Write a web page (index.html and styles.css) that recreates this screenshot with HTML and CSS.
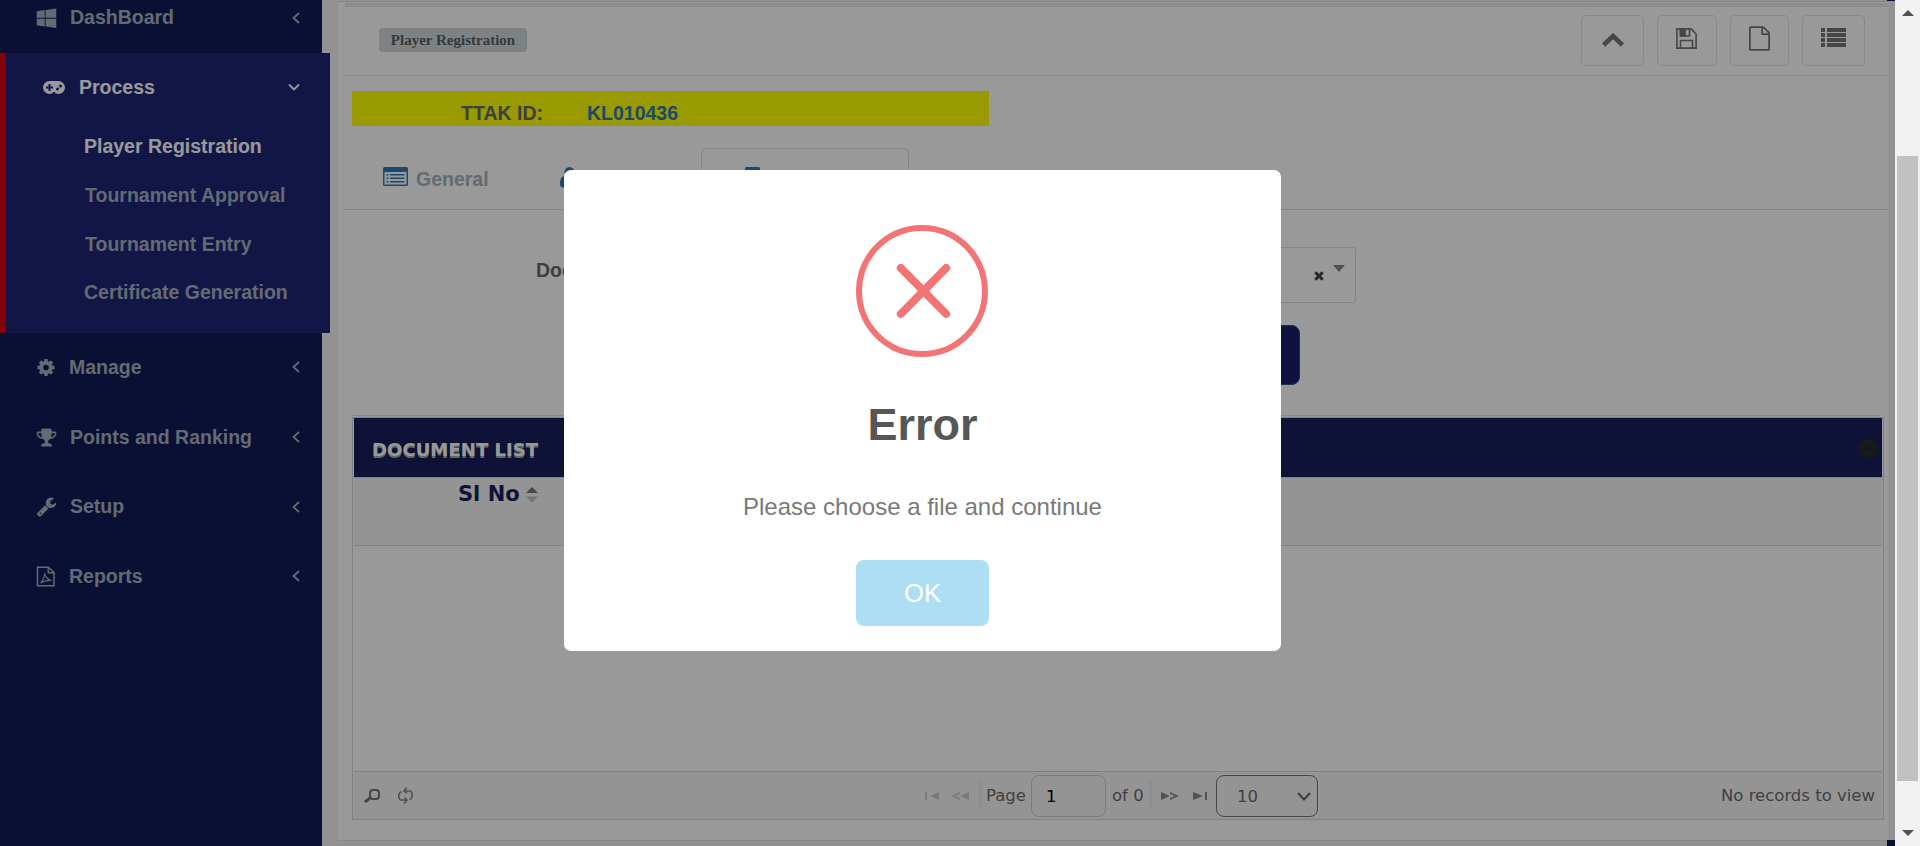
FILE: index.html
```html
<!DOCTYPE html>
<html lang="en">
<head>
<meta charset="utf-8">
<title>Player Registration</title>
<link rel="stylesheet" href="styles.css">
</head>
<body>
<div class="app">
  <nav class="sidebar">
    <div class="item first"><svg class="ic" viewBox="0 0 1792 1792"><path d="M746 1006v651l-682-94v-557h682zm0-743v659h-682v-565zm982 743v786l-907-125v-661h907zm0-878v794h-907v-669z"/></svg><span>DashBoard</span><svg class="angle" viewBox="0 0 8 12"><path d="M7 1 1.500 6 7 11"/></svg></div>
    <div class="group">
      <div class="ghead"><svg class="pad" viewBox="0 0 22 13"><path fill-rule="evenodd" d="M6.500 0h9a6.500 6.500 0 0 1 0 13c-2 0-3-1-4-2h-1c-1 1-2 2-4 2a6.500 6.500 0 0 1 0-13zM5.500 3v2.500H3v2h2.500V10h2V7.500H10v-2H7.500V3zM14.500 6.500a1.500 1.500 0 1 0 0 3 1.500 1.500 0 0 0 0-3zM17.500 3.500a1.500 1.500 0 1 0 0 3 1.500 1.500 0 0 0 0-3z"/></svg><span>Process</span><svg class="angle down" viewBox="0 0 12 8"><path d="M1 1.500 6 6.500 11 1.500"/></svg></div>
      <div class="sub on">Player Registration</div>
      <div class="sub">Tournament Approval</div>
      <div class="sub">Tournament Entry</div>
      <div class="sub">Certificate Generation</div>
    </div>
    <div class="item narrow"><svg class="ic" viewBox="0 0 1792 1792"><path d="M1152 896q0-106-75-181t-181-75-181 75-75 181 75 181 181 75 181-75 75-181zm512-109v222q0 12-8 23t-20 13l-185 28q-19 54-39 91 35 50 107 138 10 12 10 25t-9 23q-27 37-99 108t-94 71q-12 0-26-9l-138-108q-44 23-91 38-16 136-29 186-7 28-36 28h-222q-14 0-24.500-8.500t-11.500-21.500l-28-184q-49-16-90-37l-141 107q-10 9-25 9-14 0-25-11-126-114-165-168-7-10-7-23 0-12 8-23 15-21 51-66.500t54-70.500q-27-50-41-99l-183-27q-13-2-21-12.500t-8-23.500v-222q0-12 8-23t19-13l186-28q14-46 39-92-40-57-107-138-10-12-10-24 0-10 9-23 26-36 98.500-107.500t94.500-71.500q13 0 26 10l138 107q44-23 91-38 16-136 29-186 7-28 36-28h222q14 0 24.500 8.500t11.500 21.500l28 184q49 16 90 37l142-107q9-9 24-9 13 0 25 10 129 119 165 170 7 8 7 22 0 12-8 23-15 21-51 66.500t-54 70.500q26 50 41 98l183 28q13 2 21 12.500t8 23.500z"/></svg><span>Manage</span><svg class="angle" viewBox="0 0 8 12"><path d="M7 1 1.500 6 7 11"/></svg></div>
    <div class="item"><svg class="ic" viewBox="0 0 1792 1792"><path d="M522 883q-74-162-74-371h-256v96q0 78 94.500 162t235.500 113zm1078-275v-96h-256q0 209-74 371 141-29 235.500-113t94.500-162zm128-128v128q0 71-41.500 143t-112 130-173 97.500-215.500 44.500q-42 54-95 95-38 34-52.500 72.500t-14.500 89.500q0 54 30.500 91t97.500 37q75 0 133.500 45.500t58.500 114.500v64q0 14-9 23t-23 9h-832q-14 0-23-9t-9-23v-64q0-69 58.500-114.500t133.500-45.500q67 0 97.500-37t30.500-91q0-51-14.500-89.500t-52.500-72.500q-53-41-95-95-113-5-215.500-44.500t-173-97.500-112-130-41.500-143v-128q0-40 28-68t68-28h288v-96q0-66 47-113t113-47h576q66 0 113 47t47 113v96h288q40 0 68 28t28 68z"/></svg><span>Points and Ranking</span><svg class="angle" viewBox="0 0 8 12"><path d="M7 1 1.500 6 7 11"/></svg></div>
    <div class="item"><svg class="ic" viewBox="0 0 1792 1792"><path d="M448 1472q0-26-19-45t-45-19-45 19-19 45 19 45 45 19 45-19 19-45zm644-420l-682 682q-37 37-90 37-52 0-91-37l-106-108q-38-36-38-90 0-53 38-91l681-681q39 98 114.500 173.500t173.500 114.500zm634-435q0 39-23 106-47 134-164.500 217.500t-258.500 83.500q-185 0-316.500-131.500t-131.500-316.500 131.500-316.500 316.500-131.500q58 0 121.500 16.500t107.500 46.500q16 11 16 28t-16 28l-293 169v224l193 107q5-3 79-48.500t135.500-81 70.500-35.500q15 0 23.500 10t8.500 25z"/></svg><span>Setup</span><svg class="angle" viewBox="0 0 8 12"><path d="M7 1 1.500 6 7 11"/></svg></div>
    <div class="item narrow"><svg class="ic line" viewBox="0 0 20 20"><path d="M1.500.8h11L18 6v13.200H1.500zM12.300.8v5.400H18"/><path stroke-width="1.100" d="M4.500 16.500c2.500-2.500 4-6 4-9.500 1 3.500 3 6 7 7-4-.4-7.500.3-11 2.500z"/></svg><span>Reports</span><svg class="angle" viewBox="0 0 8 12"><path d="M7 1 1.500 6 7 11"/></svg></div>
  </nav>

  <main class="main">
    <section class="panel">
      <header class="title">
        <span class="label">Player Registration</span>
        <div class="tools">
          <span class="btn b1"><svg width="22" height="14" viewBox="0 0 22 14"><path d="m1.600 12 9.400-9 9.400 9" fill="none" stroke="currentColor" stroke-width="4.500"/></svg></span>
          <span class="btn b2"><svg width="21" height="21" viewBox="0 0 21 21" fill="none" stroke="currentColor" stroke-width="1.600"><path d="M.9.9H15l5.100 5.100v14.100H.9zM4.500 20v-7.500h12V20M4.500 1v7h9V1"/><path d="M4.500 1h4.500v7h-4.500z" fill="currentColor"/></svg></span>
          <span class="btn b3"><svg width="21" height="25" viewBox="128 0 1536 1792"><path fill="currentColor" d="M1596 380q28 28 48 76t20 88v1152q0 40-28 68t-68 28h-1344q-40 0-68-28t-28-68v-1600q0-40 28-68t68-28h896q40 0 88 20t76 48zm-444-244v376h376q-10-29-22-41l-313-313q-12-12-41-22zm384 1528v-1024h-416q-40 0-68-28t-28-68v-416h-768v1536h1280z"/></svg></span>
          <span class="btn b4"><svg width="25" height="19" viewBox="0 0 25 19" fill="currentColor"><path d="M0 0h4v4H0zM6 0h19v4H6zM0 5h4v4H0zM6 5h19v4H6zM0 10h4v4H0zM6 10h19v4H6zM0 15h4v4H0zM6 15h19v4H6z"/></svg></span>
        </div>
      </header>
      <div class="idbar"><span class="idlabel">TTAK ID:</span><span class="idvalue">KL010436</span></div>
      <div class="tabs">
        <div class="tab t1"><svg width="25" height="19" viewBox="0 0 25 19"><path fill="currentColor" fill-rule="evenodd" d="M1.500 0h22A1.500 1.500 0 0 1 25 1.500v16a1.500 1.500 0 0 1-1.500 1.500h-22A1.500 1.500 0 0 1 0 17.500v-16A1.500 1.500 0 0 1 1.500 0zM1.500 5v12.500h22V5zM3.500 7h2v1.500h-2zM7 7h14.500v1.500H7zM3.500 10.500h2V12h-2zM7 10.500h14.500V12H7zM3.500 14h2v1.500h-2zM7 14h14.500v1.500H7z"/></svg><span>General</span></div>
        <div class="tab t2"><svg width="20" height="21" viewBox="0 0 20 21"><path fill="currentColor" d="M9.500 0a5 5 0 0 1 5 5.200c0 2.800-2 5-5 5s-5-2.200-5-5a5 5 0 0 1 5-5.200zM4 9c1.500 1.500 3 2.300 5.500 2.300S13.500 10.500 15 9c3 .8 4.500 4 4.500 8 0 2-1 3.500-3 3.500H3c-2 0-3-1.500-3-3.500 0-4 1-7.200 4-8z"/></svg></div>
        <div class="tab t3"><svg width="23" height="20" viewBox="0 0 23 20"><path fill="currentColor" d="M5 0h13q1 0 1 2v18H4V2q0-2 1-2z"/></svg></div>
      </div>
      <div class="form">
        <div class="row"><label>Document</label><div class="select"><svg class="clear" width="10" height="10" viewBox="0 0 10 10"><path d="m1.300 1.300 7.400 7.400m0-7.400L1.300 8.700"/></svg><svg class="caret" width="12" height="7" viewBox="0 0 12 7"><path d="M0 0h12L6 7z"/></svg></div></div>
        <div class="upload"></div>
      </div>
      <div class="rule"></div>
      <div class="grid">
        <div class="cap"><span>DOCUMENT LIST</span><svg width="19" height="19" viewBox="0 0 19 19"><path fill-rule="evenodd" d="M9.500 0a9.500 9.500 0 1 1 0 19 9.500 9.500 0 0 1 0-19zM4.500 11h10l-5-5z"/></svg></div>
        <div class="cols"><span>Sl No</span><svg width="12" height="16" viewBox="0 0 12 16"><path fill="#777" d="M6 0l6 6H0z"/><path fill="#c2c2c2" d="M0 9.500h12l-6 6z"/></svg></div>
        <div class="rows"></div>
        <div class="pager">
          <svg class="p-find" width="16" height="14" viewBox="0 0 16 14" fill="none" stroke="#777"><rect x="6" y="1" width="9" height="9" rx="3" stroke-width="2"/><path d="M6.500 8.500 1 13" stroke-width="3"/></svg>
          <svg class="p-refresh" width="15" height="17" viewBox="0 0 15 17" fill="none" stroke="#888" stroke-width="1.600"><path d="M3.500 4.500C0 6 0 11 2.500 13H9M6.500 10.500 9 13l-3 3.500M11.500 12.500C15 11 15 6 12.500 4H6M8.500.5 6 4l3 2.500"/></svg>
          <svg class="p-first" width="14" height="8" viewBox="0 0 14 8" fill="#cbcbcb"><path d="M0 0h2v8H0zM14 0v8L5 4z"/></svg>
          <svg class="p-prev" width="18" height="8" viewBox="0 0 18 8" fill="#cbcbcb"><path d="M18 0v8L9 4zM9 0v2L4 4l5 2v2L0 4z"/></svg>
          <i class="sep s1"></i>
          <span class="word">Page</span>
          <span class="pageno">1</span>
          <span class="word of">of 0</span>
          <i class="sep s2"></i>
          <svg class="p-next" width="18" height="8" viewBox="0 0 18 8" fill="#8a8a8a"><path d="M0 0v8l9-4zM9 0v2l5 2-5 2v2l9-4z"/></svg>
          <svg class="p-last" width="14" height="8" viewBox="0 0 14 8" fill="#8a8a8a"><path d="M12 0h2v8h-2zM0 0v8l10-4z"/></svg>
          <span class="size"><span>10</span><svg width="14" height="9" viewBox="0 0 14 9"><path d="m1 1 6 6.500L13 1" fill="none" stroke="#666" stroke-width="2"/></svg></span>
          <span class="records">No records to view</span>
        </div>
      </div>
    </section>
  </main>
  <div class="scrollbar"><i class="up"></i><div class="thumb"></div><i class="dn"></i></div>

  <div class="overlay">
    <div class="dialog" role="alertdialog">
      <svg class="error" width="132" height="132" viewBox="0 0 132 132" fill="none" stroke="#f27474"><circle cx="66" cy="66" r="63" stroke-width="6"/><path stroke-width="8" stroke-linecap="round" d="m44.800 43 45.400 46m0-46-45.400 46"/></svg>
      <h2>Error</h2>
      <p>Please choose a file and continue</p>
      <button>OK</button>
    </div>
  </div>
</div>
</body>
</html>
```
FILE: styles.css
```css
* { box-sizing: border-box; }
body { margin: 0; font: 19.5px "Liberation Sans", Arial, sans-serif; color: #676a6c; overflow: hidden; }
svg { display: block; flex: none; }
.app { position: relative; display: grid; grid-template-columns: 322px 1fr 25px; width: 1920px; height: 846px; background: #f3f3f4; overflow: hidden; }

.sidebar { background: #111b55; color: #a7b1c2; font-weight: bold; }
.item { height: 69.7px; display: flex; align-items: center; padding: 0 22px 1px 36px; }
.item.first { height: 53px; padding-bottom: 18px; }
.ic { width: 21px; height: 21px; fill: currentColor; margin-right: 13px; }
.item.narrow .ic { width: 20px; margin-right: 13px; }
.ic.line { fill: none; stroke: currentColor; stroke-width: 1.5; }
.angle { width: 8px; height: 12px; margin-left: auto; fill: none; stroke: currentColor; stroke-width: 1.8; }
.group { width: 330px; height: 280px; background: #1e2675; border-left: 6px solid #dc0510; position: relative; }
.ghead { height: 69px; display: flex; align-items: center; padding: 0 30px 1px 37px; color: #fff; }
.pad { width: 22px; height: 13px; fill: currentColor; margin-right: 14px; }
.angle.down { width: 12px; height: 8px; }
.sub { height: 48.8px; line-height: 49px; padding-left: 79px; }
.sub.on { color: #fff; padding-left: 78px; }
.sub:last-child { padding-left: 78px; }

.main { position: relative; padding: 2px 7px 0 15px; }
.main::before, .main::after { content: ""; position: absolute; right: 0; width: 8px; background: #111b55; }
.main::before { top: 0; height: 1px; }
.main::after { bottom: 0; height: 6px; }
.panel { height: 838px; background: #fff; box-shadow: 0 -1px 0 #e0e0e0, 0 1px 0 #e0e0e0; border-left: 1px solid #eee; padding: 1px 0 0 7px; }
.title { height: 73px; border-top: 4px solid #e7eaec; border-bottom: 1px solid #e0e3e5; display: flex; justify-content: space-between; align-items: flex-start; }
.label { margin: 21px 0 0 34px; width: 148px; height: 24px; border-radius: 4px; background: #d1dade; color: #5e5e5e; font: bold 15px/24px "Liberation Serif", "Times New Roman", serif; text-align: center; }
.tools { display: flex; margin: 8px 23px 0 0; color: #767676; }
.btn { height: 51px; border: 1px solid #e2e4e6; border-radius: 5px; display: flex; justify-content: center; align-items: center; }
.b1 { width: 63px; margin-right: 13px; padding-bottom: 1px; }
.b2 { width: 60px; margin-right: 13px; padding: 0 1px 4px 0; }
.b3 { width: 59px; margin-right: 13px; padding: 0 1px 4px 0; }
.b4 { width: 63px; padding-bottom: 6px; }
.idbar { margin: 15px 0 0 7px; width: 637px; height: 35px; background: #ff0; font-weight: bold; display: flex; line-height: 45px; overflow: hidden; }
.idlabel { width: 126px; margin-left: 109px; }
.idvalue { color: #337ab7; }
.tabs { height: 62px; margin-top: 22px; border-bottom: 1px solid #ddd; display: flex; color: #337ab7; }
.tab { height: 62px; }
.t1 { width: 177px; padding: 19px 0 0 38px; display: flex; gap: 8px; }
.t1 span { color: #a7b1c2; font-weight: bold; line-height: 24px; }
.t2 { width: 179px; padding: 19px 0 0 38px; }
.t3 { width: 208px; border: 1px solid #ddd; border-bottom: 0; border-radius: 6px 6px 0 0; padding: 18px 0 0 39px; }
.form { height: 205px; }
.row { display: flex; padding: 37px 0 0 191px; font-weight: bold; }
.row label { line-height: 46px; width: 100px; }
.select { width: 720px; height: 56px; border: 1px solid #ddd; border-radius: 3px; display: flex; justify-content: flex-end; padding: 0 10px 0 0; }
.clear { margin: 23px 9px 0 0; stroke: #444; stroke-width: 3; }
.caret { margin-top: 17px; fill: #888; }
.upload { width: 300px; height: 60px; margin: 22px 0 0 655px; background: #1a1f6b; border: 1px solid #1b5a8c; border-radius: 8px; }
.rule { height: 1px; width: 1528px; margin-left: 7px; background: #e2e4e6; }
.grid { margin: 1px 0 0 7px; width: 1532px; height: 403px; border: 1px solid #d7d7d7; padding: 0 1px; font-family: "DejaVu Sans", Verdana, sans-serif; }
.cap { height: 59px; background: #161f5a; color: #fff; display: flex; justify-content: space-between; align-items: center; padding: 4px 4px 0 18px; font-weight: bold; font-size: 18.1px; width: 1528px; text-shadow: 0 1.5px 0 #aaa; }
.cap svg { fill: #2a2a2a; position: relative; top: -1px; }
.cols { height: 69px; border: solid #dcdcdc; border-width: 1px 0; background: #f7f7f8; color: #161f5a; font-weight: bold; font-size: 21px; display: flex; padding: 4px 0 0 104px; gap: 6px; }
.cols svg { margin-top: 5px; }
.rows { height: 225px; }
.pager { height: 48px; border-top: 1px solid #d5d5d5; background: #f7f7f8; display: flex; align-items: center; font-size: 16.5px; padding-left: 10px; color: #6b6b6b; }
.p-refresh { margin: 0 512px 0 18px; }
.p-prev { margin: 0 10px 0 12px; }
.sep { width: 3px; height: 27px; border: solid #e6e6e6; border-width: 0 1px; }
.word { width: 45px; margin-left: 4px; white-space: nowrap; }
.pageno { width: 75px; height: 42px; border: 1px solid #ccc; border-radius: 8px; line-height: 42px; padding-left: 14px; color: #000; }
.word.of { width: 32px; margin-left: 6px; }
.s2 { margin-left: 5px; }
.p-next { margin-left: 9px; }
.p-last { margin-left: 14px; }
.size { width: 102px; height: 42px; border: 1px solid #767676; border-radius: 8px; margin-left: 9px; display: flex; align-items: center; justify-content: space-between; padding: 1px 6px 0 20px; }
.records { margin-left: auto; margin-right: 7px; }

.scrollbar { background: #f1f1f1; display: flex; flex-direction: column; align-items: center; padding-top: 10px; }
.up, .dn { width: 0; border: solid transparent; border-width: 0 6px 6px; border-bottom-color: #505050; }
.dn { border-width: 6px 6px 0; border-top-color: #505050; margin-top: 49px; }
.thumb { width: 21px; height: 625px; margin-top: 140px; background: #c1c1c1; }

.overlay { position: absolute; inset: 0 25px 0 0; background: rgba(0,0,0,.4); }
.dialog { position: absolute; left: 564px; top: 170px; width: 717px; height: 481px; background: #fff; border-radius: 7px; display: flex; flex-direction: column; align-items: center; padding-top: 55px; }
.error { margin-right: 1px; }
.dialog h2 { margin: 38px 0 0; font-size: 45px; line-height: 60px; color: #575757; }
.dialog p { margin: 37px 0 0; font-size: 24px; line-height: 30px; color: #797979; }
.dialog button { margin-top: 38px; width: 133px; height: 66px; border: 0; border-radius: 8px; background: #aedef4; color: #fff; font: 25.5px "Liberation Sans", Arial, sans-serif; }
```
